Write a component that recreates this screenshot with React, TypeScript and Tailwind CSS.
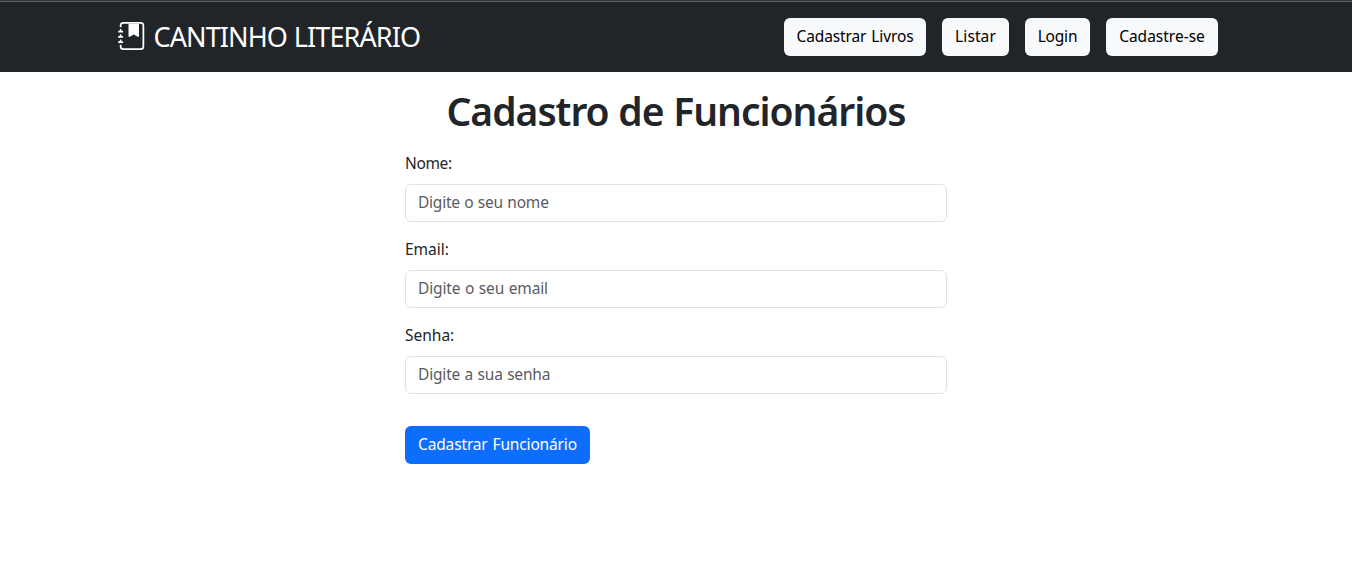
import { BsJournalBookmarkFill } from "react-icons/bs";

const links = [
  { label: "Cadastrar Livros", size: "w-[142px]", tracking: "tracking-[-0.12px] [word-spacing:1px]" },
  { label: "Listar", size: "w-[67px]", tracking: "tracking-[0.1px]" },
  { label: "Login", size: "w-[65px]", tracking: "tracking-[-0.2px]" },
  { label: "Cadastre-se", size: "w-[112px]", tracking: "tracking-normal" },
];

const fields = [
  { id: "nome", label: "Nome:", placeholder: "Digite o seu nome", type: "text", labelTracking: "tracking-[-0.35px]", tracking: "tracking-[-0.22px]" },
  { id: "email", label: "Email:", placeholder: "Digite o seu email", type: "email", labelTracking: "tracking-normal", tracking: "tracking-[-0.12px]" },
  { id: "senha", label: "Senha:", placeholder: "Digite a sua senha", type: "password", labelTracking: "tracking-normal", tracking: "tracking-[-0.18px]" },
];

function Header() {
  return (
    <header className="h-[72px] bg-[#212529]">
      <div className="h-px bg-[#35373a]" />
      <div className="h-px bg-[#5f5f61]" />
      <div className="mx-auto flex h-[70px] w-[1116px] items-center justify-between pr-4">
        <a href="#" className="flex items-center gap-[7.5px] pb-0.5 text-white">
          <BsJournalBookmarkFill className="size-7" />
          <span className="pt-0.5 text-[27px] leading-[42px] tracking-[-0.88px] whitespace-nowrap [word-spacing:0.5px]">
            CANTINHO LITERÁRIO
          </span>
        </a>
        <nav className="flex gap-4">
          {links.map((l) => (
            <a
              key={l.label}
              href="#"
              className={`flex h-[38px] items-center justify-center rounded-md bg-[#f8f9fa] text-[15.5px] whitespace-nowrap text-black ${l.size} ${l.tracking}`}
            >
              {l.label}
            </a>
          ))}
        </nav>
      </div>
    </header>
  );
}

export default function App() {
  return (
    <div className="min-h-screen bg-white font-['Noto_Sans',sans-serif] text-[#212529]">
      <Header />
      <main className="mx-auto w-[542px] pt-[15px]">
        <h1 className="text-center text-[39px] leading-12 font-semibold tracking-[-1px] whitespace-nowrap [word-spacing:0.5px]">
          Cadastro de Funcionários
        </h1>
        <form className="mt-4 flex flex-col gap-[15px]" onSubmit={(e) => e.preventDefault()}>
          {fields.map((f) => (
            <div key={f.id} className="flex flex-col gap-[9px]">
              <label htmlFor={f.id} className={`text-[15.5px] leading-6 ${f.labelTracking}`}>
                {f.label}
              </label>
              <input
                id={f.id}
                type={f.type}
                placeholder={f.placeholder}
                className={`h-[38px] rounded-md border border-[#dee2e6] px-3 pb-0.5 text-[15.5px] [word-spacing:0.6px] placeholder:text-[#595c5f] ${f.tracking}`}
              />
            </div>
          ))}
          <button
            type="submit"
            className="mt-[17px] h-[38px] w-[185px] rounded-md bg-[#0d6efd] text-[15.5px] tracking-[-0.15px] whitespace-nowrap text-white [word-spacing:1px]"
          >
            Cadastrar Funcionário
          </button>
        </form>
      </main>
    </div>
  );
}
